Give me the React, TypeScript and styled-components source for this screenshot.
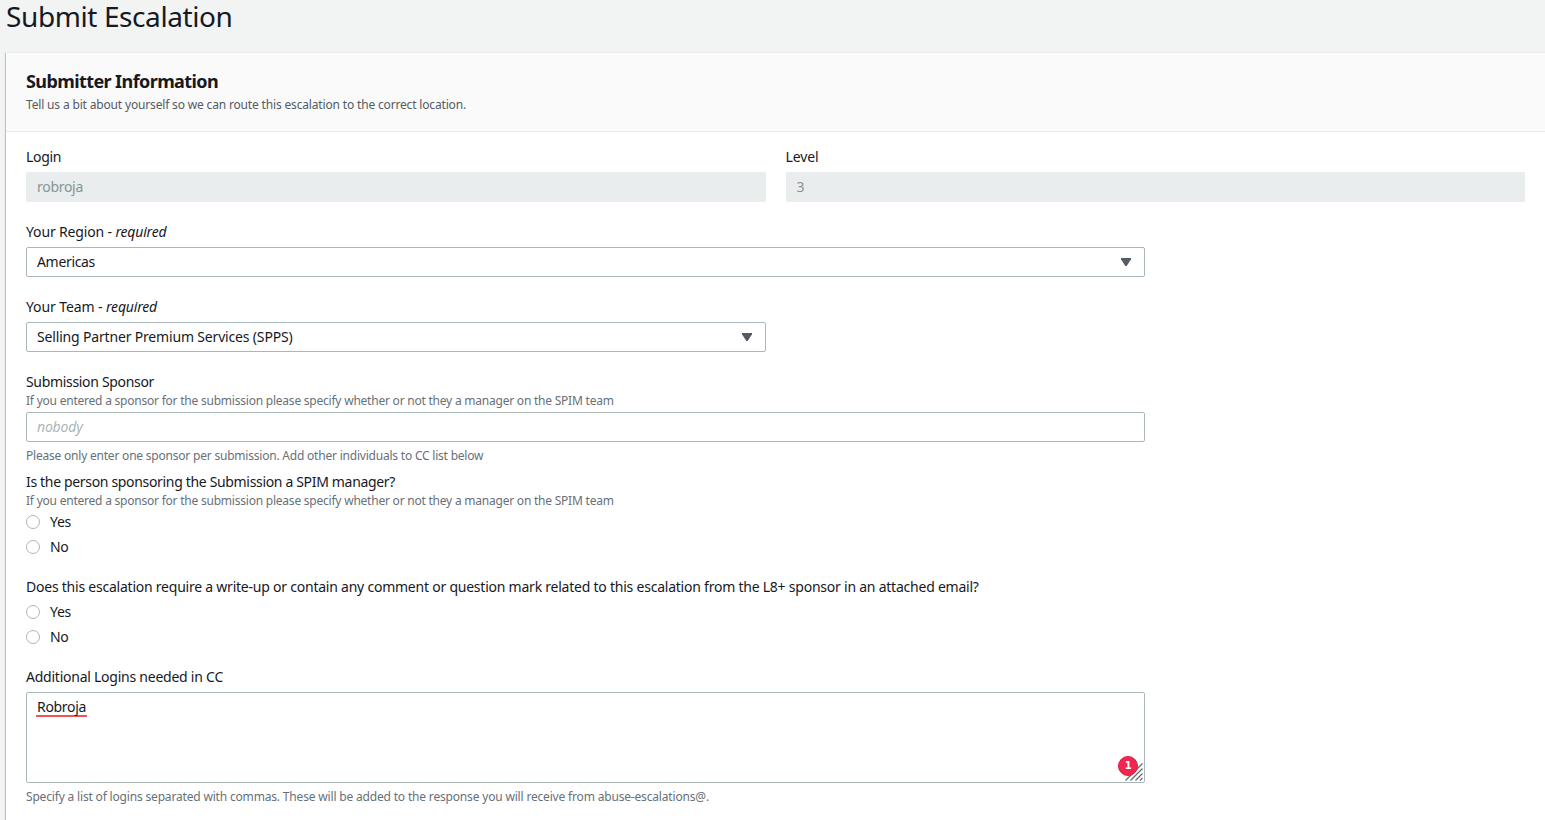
import React from "react";
import styled, { createGlobalStyle } from "styled-components";

const GlobalStyle = createGlobalStyle`
  *, *::before, *::after { box-sizing: border-box; }
  body {
    margin: 0;
    height: 820px;
    overflow: hidden;
    background: #f2f3f3;
    color: #16191f;
    font: 400 14px/22px "Noto Sans", "Open Sans", sans-serif;
  }
`;

const Page = styled.main`
  height: 820px;
  padding-left: 6px;
  display: flex;
  flex-direction: column;
`;

const Title = styled.h1`
  margin: 0;
  height: 52px;
  flex: none;
  font-size: 28px;
  font-weight: 400;
  line-height: 33px;
  letter-spacing: -0.4px;
`;

const Card = styled.section`
  flex: 1;
  background: #fff;
  border-top: 1px solid #eaeded;
  box-shadow: 0 1px 1px 0 rgba(0, 28, 36, 0.15), -1px 1px 1px 0 rgba(0, 28, 36, 0.2);
`;

const CardHeader = styled.header`
  height: 79px;
  padding: 17px 20px 0;
  background: #fafafa;
  border-bottom: 1px solid #eaeded;
`;

const Heading = styled.h2`
  margin: 0;
  font-size: 18px;
  font-weight: 700;
  line-height: 22px;
  letter-spacing: -0.59px;
`;

const HeaderText = styled.p`
  margin: 4px 0 0;
  font-size: 12px;
  line-height: 18px;
  letter-spacing: -0.163px;
  color: #545b64;
`;

const Form = styled.form`
  padding: 14px 20px 0;
  display: flex;
  flex-direction: column;
`;

const Columns = styled.div`
  display: grid;
  grid-template-columns: 1fr 1fr;
  column-gap: 20px;
`;

const Field = styled.div<{ $width?: string; $gap?: number }>`
  width: ${(p) => p.$width ?? "100%"};
  margin-bottom: ${(p) => p.$gap ?? 19}px;
  display: flex;
  flex-direction: column;
`;

const THREE_QUARTERS = "calc(75% - 5px)";
const HALF = "calc(50% - 10px)";

const Label = styled.label<{ $track?: number }>`
  line-height: 22px;
  letter-spacing: ${(p) => p.$track ?? -0.23}px;
  white-space: nowrap;
`;

const Required = styled.em`
  letter-spacing: -0.18px;
`;

const Hint = styled.span<{ $track?: number }>`
  height: 15px;
  font-size: 12px;
  line-height: 15px;
  letter-spacing: ${(p) => p.$track ?? -0.223}px;
  color: #687078;
  white-space: nowrap;
`;

const Constraint = styled(Hint)`
  margin-top: 6px;
`;

const Input = styled.input`
  height: 30px;
  width: 100%;
  margin: 4px 0 0;
  padding: 0 10px 2px;
  border: 1px solid #aab7b8;
  border-radius: 2px;
  background: #fff;
  color: #16191f;
  font: inherit;
  letter-spacing: -0.29px;
  outline: none;

  &:disabled {
    border-color: #e9eded;
    background: #e9eded;
    color: #879596;
  }

  &::placeholder {
    color: #aab7b8;
    font-style: italic;
    letter-spacing: -0.19px;
    opacity: 1;
  }
`;

const SelectBox = styled.div<{ $track: number }>`
  height: 30px;
  margin-top: 4px;
  padding: 0 13px 0 10px;
  display: flex;
  align-items: center;
  justify-content: space-between;
  border: 1px solid #aab7b8;
  border-radius: 2px;
  letter-spacing: ${(p) => p.$track}px;
`;

const Caret = () => (
  <svg width="10" height="8" viewBox="0 0 10 8" aria-hidden="true">
    <path d="M0 0H10V1.2L5.7 8H4.3L0 1.2Z" fill="#545b64" />
  </svg>
);

const RadioGroup = styled.div`
  margin-top: 1px;
`;

const RadioRow = styled.label`
  height: 25px;
  display: flex;
  align-items: center;
  gap: 10px;
  letter-spacing: -0.3px;
`;

const Radio = styled.input`
  appearance: none;
  width: 14px;
  height: 14px;
  margin: 0;
  border: 1px solid #aab7b8;
  border-radius: 50%;
  background: #fff;
`;

const TextArea = styled.div`
  position: relative;
  height: 91px;
  margin-top: 4px;
  padding: 3px 10px;
  border: 1px solid #aab7b8;
  border-radius: 2px;
`;

const Misspelled = styled.span`
  display: inline-block;
  height: 21px;
  margin-left: -1px;
  padding: 0 1px;
  border-bottom: 2px solid #eb5757;
  line-height: 22px;
  letter-spacing: -0.31px;
`;

const Grip = styled.svg`
  position: absolute;
  right: 1px;
  bottom: 1px;
`;

const Badge = styled.span`
  position: absolute;
  right: 6px;
  bottom: 6px;
  width: 20px;
  height: 20px;
  border: 1px solid #d51f45;
  border-radius: 50%;
  background: #f0264f;
  color: #fff;
  font-family: "DejaVu Sans", sans-serif;
  font-size: 10px;
  font-weight: 700;
  line-height: 18px;
  text-align: center;
`;

function YesNo({ name }: { name: string }) {
  return (
    <RadioGroup>
      {["Yes", "No"].map((option) => (
        <RadioRow key={option}>
          <Radio type="radio" name={name} />
          {option}
        </RadioRow>
      ))}
    </RadioGroup>
  );
}

const SPONSOR_HINT =
  "If you entered a sponsor for the submission please specify whether or not they a manager on the SPIM team";

export default function App() {
  return (
    <>
      <GlobalStyle />
      <Page>
        <Title>Submit Escalation</Title>
        <Card>
          <CardHeader>
            <Heading>Submitter Information</Heading>
            <HeaderText>
              Tell us a bit about yourself so we can route this escalation to the correct location.
            </HeaderText>
          </CardHeader>
          <Form>
            <Columns>
              <Field>
                <Label $track={-0.3}>Login</Label>
                <Input disabled defaultValue="robroja" />
              </Field>
              <Field>
                <Label $track={-0.11}>Level</Label>
                <Input disabled defaultValue="3" />
              </Field>
            </Columns>
            <Field $width={THREE_QUARTERS}>
              <Label $track={-0.15}>
                Your Region - <Required>required</Required>
              </Label>
              <SelectBox $track={-0.33}>
                Americas
                <Caret />
              </SelectBox>
            </Field>
            <Field $width={HALF}>
              <Label $track={-0.1}>
                Your Team - <Required>required</Required>
              </Label>
              <SelectBox $track={-0.17}>
                Selling Partner Premium Services (SPPS)
                <Caret />
              </SelectBox>
            </Field>
            <Field $width={THREE_QUARTERS} $gap={8}>
              <Label $track={-0.323}>Submission Sponsor</Label>
              <Hint>{SPONSOR_HINT}</Hint>
              <Input placeholder="nobody" />
              <Constraint $track={-0.21}>
                Please only enter one sponsor per submission. Add other individuals to CC list below
              </Constraint>
            </Field>
            <Field $gap={17}>
              <Label $track={-0.331}>Is the person sponsoring the Submission a SPIM manager?</Label>
              <Hint>{SPONSOR_HINT}</Hint>
              <YesNo name="manager" />
            </Field>
            <Field $gap={17}>
              <Label $track={-0.23}>
                Does this escalation require a write-up or contain any comment or question mark related
                to this escalation from the L8+ sponsor in an attached email?
              </Label>
              <YesNo name="writeup" />
            </Field>
            <Field $width={THREE_QUARTERS} $gap={0}>
              <Label $track={-0.241}>Additional Logins needed in CC</Label>
              <TextArea>
                <Misspelled>Robroja</Misspelled>
                <Grip width="18" height="18" viewBox="0 0 18 18" aria-hidden="true">
                  <path
                    d="M0.5 17.5L17.5 0.5M5.5 17.5L17.5 5.5M10.5 17.5L17.5 10.5M15 17.5L17.5 15"
                    stroke="#6b6b6b"
                    strokeWidth="1.3"
                  />
                </Grip>
                <Badge>1</Badge>
              </TextArea>
              <Constraint $track={-0.174}>
                Specify a list of logins separated with commas. These will be added to the response you
                will receive from abuse-escalations@.
              </Constraint>
            </Field>
          </Form>
        </Card>
      </Page>
    </>
  );
}
